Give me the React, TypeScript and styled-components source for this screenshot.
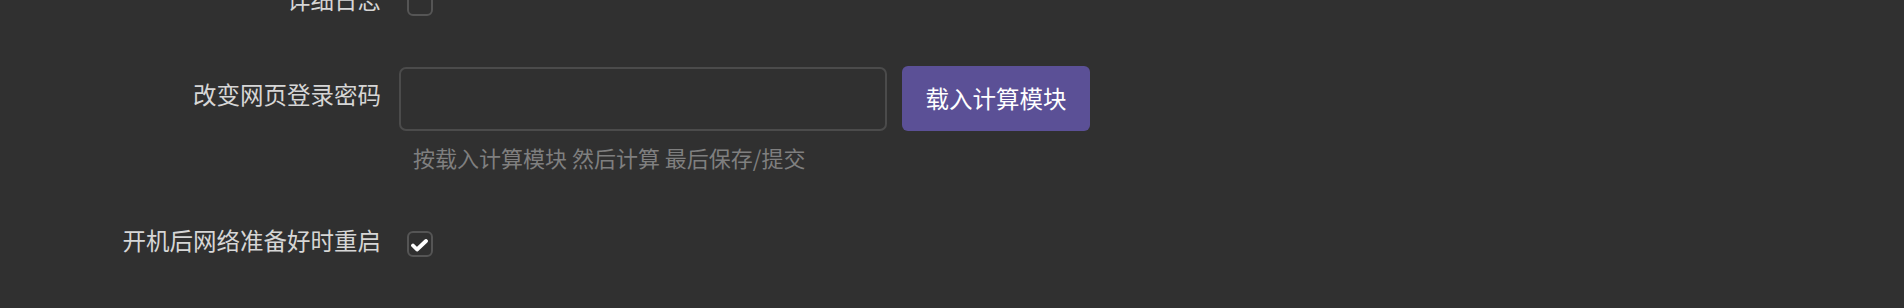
import React from "react";
import styled, { createGlobalStyle } from "styled-components";

const GlobalStyle = createGlobalStyle`
	html, body {
		margin: 0;
		padding: 0;
		background: #303030;
		overflow: hidden;
	}
	body {
		font-family: "Noto Sans CJK SC", "Noto Sans", sans-serif;
	}
`;

const Page = styled.div`
	width: 1904px;
	height: 308px;
	overflow: hidden;
	background: #303030;
`;

const Form = styled.div`
	display: flex;
	flex-direction: column;
	gap: 50px;
	margin-top: -18px;
`;

const Row = styled.div`
	display: grid;
	grid-template-columns: 381px 1fr;
	column-gap: 18px;
	align-items: start;
`;

const Label = styled.div<{ $offset?: number }>`
	text-align: right;
	font-size: 23.5px;
	line-height: 35px;
	color: #d6d6d6;
	white-space: nowrap;
	padding-top: ${({ $offset }) => $offset ?? 0}px;
`;

const Field = styled.div`
	display: flex;
	flex-direction: column;
`;

const Inline = styled.div`
	display: flex;
	align-items: center;
	gap: 15px;
`;

const TextInput = styled.input`
	box-sizing: border-box;
	width: 488px;
	height: 64px;
	background: transparent;
	border: 2px solid #4b4b4b;
	border-radius: 7px;
	outline: none;
	color: #ddd;
	font-size: 22px;
	padding: 0 14px;
	font-family: inherit;
`;

const Button = styled.button`
	box-sizing: border-box;
	width: 188px;
	height: 65px;
	border: none;
	border-radius: 6px;
	background: #5b5096;
	color: #ffffff;
	font-family: inherit;
	font-size: 23.5px;
	cursor: pointer;
	padding: 0;
	margin-top: -2px;
`;

const Help = styled.div`
	margin-top: 10px;
	padding-left: 14px;
	font-size: 22px;
	line-height: 32px;
	color: #7f7f7f;
	white-space: nowrap;
`;

const Box = styled.div<{ $checked?: boolean }>`
	box-sizing: border-box;
	width: 26px;
	height: 26px;
	margin: 8px 0 0 8px;
	border: 2px solid #555555;
	border-radius: 6px;
	display: flex;
	align-items: center;
	justify-content: center;
	svg {
		display: ${({ $checked }) => ($checked ? "block" : "none")};
		margin: 2px 1px 0 0;
	}
`;

const Check = ({ checked }: { checked?: boolean }) => (
	<Box $checked={checked}>
		<svg width="17" height="13" viewBox="0 0 17 13">
			<path
				d="M2 6.5 L6 10.5 L15 2"
				fill="none"
				stroke="#ffffff"
				strokeWidth="3.8"
				strokeLinecap="round"
				strokeLinejoin="round"
			/>
		</svg>
	</Box>
);

export default function App() {
	return (
		<Page>
			<GlobalStyle />
			<Form>
				<Row>
					<Label>详细日志</Label>
					<Check />
				</Row>
				<Row>
					<Label $offset={10}>改变网页登录密码</Label>
					<Field>
						<Inline>
							<TextInput type="password" />
							<Button>载入计算模块</Button>
						</Inline>
						<Help>按载入计算模块 然后计算 最后保存/提交</Help>
					</Field>
				</Row>
				<Row>
					<Label>开机后网络准备好时重启</Label>
					<Check checked />
				</Row>
			</Form>
		</Page>
	);
}
